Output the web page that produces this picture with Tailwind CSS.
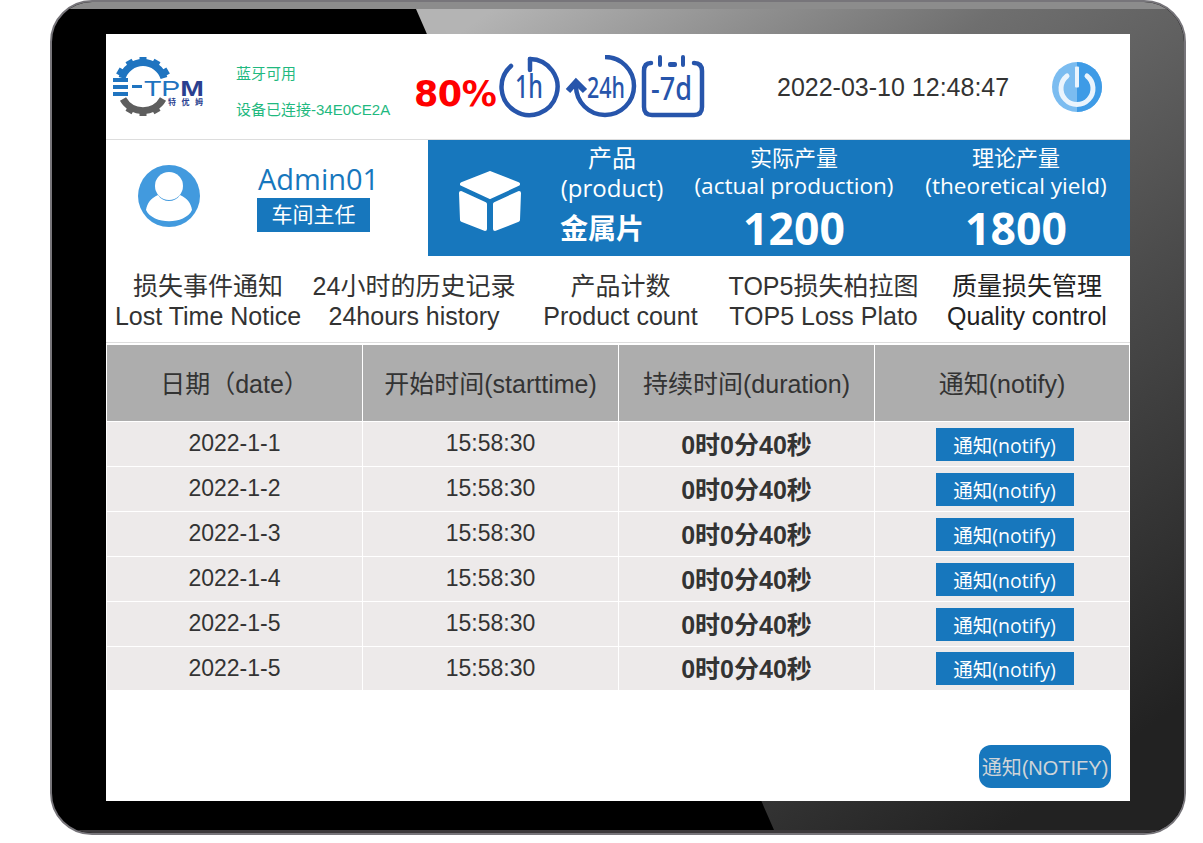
<!DOCTYPE html>
<html lang="en">
<head>
  <meta charset="UTF-8" />
  <title>E-TPM</title>
  <script src="https://cdn.jsdelivr.net/npm/@tailwindcss/browser@4"></script>
</head>
<body class="bg-white w-[1203px] h-[843px] overflow-hidden font-['Liberation_Sans','Noto_Sans_CJK_SC',sans-serif] text-[#333]">
  <!-- tablet frame -->
  <div class="relative ml-[50px] w-[1136px] h-[835px] pt-[34px] pl-[56px] rounded-[42px] bg-black border-[2px] border-[#77757a] box-border overflow-hidden">
    <svg class="absolute left-[-2px] top-[-2px]" width="1136" height="835" viewBox="0 0 1136 835">
      <defs>
        <linearGradient id="sheen" x1="0.1" y1="0" x2="0.75" y2="1">
          <stop offset="0" stop-color="#b4b4b4" />
          <stop offset="0.3" stop-color="#6f6f6f" />
          <stop offset="0.62" stop-color="#4a4a4a" />
          <stop offset="1" stop-color="#222222" />
        </linearGradient>
      </defs>
      <polygon points="366,9 1136,9 1136,835 724,830" fill="url(#sheen)" />
      <rect x="0" y="0" width="1136" height="9" fill="#8c8c8c" />
      <rect x="0" y="830" width="1136" height="5" fill="#3c393b" />
    </svg>

    <!-- screen -->
    <div class="relative w-[1024px] h-[767px] -mt-[2px] -ml-[2px] bg-white flex flex-col">
      <!-- top bar -->
      <div class="h-[106px] flex items-center border-b border-[#ddd] shrink-0">
        <svg class="ml-[7px] shrink-0" width="92" height="60" viewBox="113 57 92 60">
          <path d="M122 78 A22 22 0 0 1 164 78" fill="none" stroke="#1f74c0" stroke-width="7" />
          <g fill="#1f74c0">
            <rect x="139.5" y="57" width="7" height="6" /><rect x="152.5" y="60" width="7" height="6" transform="rotate(30 156 63)" /><rect x="126.5" y="60" width="7" height="6" transform="rotate(-30 130 63)" /><rect x="162" y="69" width="7" height="6" transform="rotate(60 165.5 72)" /><rect x="117" y="69" width="7" height="6" transform="rotate(-60 120.5 72)" />
          </g>
          <path d="M123 99 A23 23 0 0 0 163 99" fill="none" stroke="#5e5e5e" stroke-width="7" />
          <g fill="#5e5e5e">
            <rect x="139.5" y="110" width="7" height="6" /><rect x="126.5" y="107" width="7" height="6" transform="rotate(30 130 110)" /><rect x="152.5" y="107" width="7" height="6" transform="rotate(-30 156 110)" />
          </g>
          <g fill="#1f74c0"><rect x="113" y="78" width="15" height="4" /><rect x="113" y="85" width="15" height="4" /><rect x="113" y="92" width="15" height="4" /><rect x="132" y="85" width="10" height="3" /></g>
          <text x="144" y="96" font-family="Liberation Sans" font-size="22" textLength="60" lengthAdjust="spacingAndGlyphs"><tspan fill="#1f74c0">TP</tspan><tspan fill="#2a3f8f" font-weight="700">M</tspan></text>
          <text x="168" y="105" font-family="Noto Sans CJK SC" font-size="8" fill="#2a3f8f" font-weight="700" textLength="35">特优姆</text>
        </svg>
        <div class="ml-[31px] w-[178px] shrink-0 text-[15px] text-[#1fb97f] leading-[18px] whitespace-nowrap mt-[11px]">
          <div>蓝牙可用</div>
          <div class="mt-[18px]">设备已连接-34E0CE2A</div>
        </div>
        <div class="w-[84px] mt-[16px] shrink-0 font-['DejaVu_Sans',sans-serif] font-bold text-[35px] text-[#ff0000] tracking-[-0.5px] whitespace-nowrap">80%</div>
        <!-- viewBox uses page coordinates -->
        <svg class="shrink-0" width="208" height="64" viewBox="498 55 208 64">
          <g fill="none" stroke="#2755ab" stroke-width="4.5" stroke-linecap="round">
            <path d="M530 59 A28 28 0 1 1 511 66" />
            <path d="M530 59 V70" />
            <path d="M605 57 A29 29 0 1 1 576 86" stroke-linecap="butt" />
            <path d="M651 63 Q644 63 644 71 V107 Q644 115 652 115 H694 Q702 115 702 107 V71 Q702 63 694 63" />
            <path d="M568 91 L576 82 L585 91" stroke-width="6" stroke-linecap="butt" />
          </g>
          <g fill="#2755ab">
            <rect x="658" y="55" width="4" height="12" rx="2" /><rect x="681" y="55" width="4" height="12" rx="2" /><rect x="668" y="62" width="9" height="5" rx="2" />
          </g>
          <g font-family="Noto Sans" font-weight="500" fill="#2755ab">
            <text x="515" y="98" font-size="32" textLength="28" lengthAdjust="spacingAndGlyphs">1h</text>
            <text x="587" y="98" font-size="29" textLength="38" lengthAdjust="spacingAndGlyphs">24h</text>
            <text x="651" y="100" font-size="32" textLength="41" lengthAdjust="spacingAndGlyphs">-7d</text>
          </g>
        </svg>
        <div class="ml-[71px] w-[275px] shrink-0 text-[25px] text-[#333] mt-[3px] whitespace-nowrap">2022-03-10 12:48:47</div>
        <svg class="shrink-0" width="50" height="50" viewBox="0 0 50 50">
          <circle cx="25" cy="25" r="25" fill="#7bbcf0" />
          <path d="M25 0 A25 25 0 0 1 25 50 Z" fill="#3e9be6" />
          <path d="M15 14 A16 16 0 1 0 35 14" fill="none" stroke="#eaf4fd" stroke-width="5" stroke-linecap="round" />
          <rect x="23" y="4.5" width="4" height="21" rx="1" fill="#eaf4fd" />
        </svg>
      </div>

      <!-- user + product band -->
      <div class="h-[116px] flex shrink-0">
        <div class="w-[322px] flex shrink-0">
          <svg class="ml-[31px] mt-[25px] shrink-0" width="64" height="62" viewBox="0 0 64 62">
            <circle cx="32" cy="31" r="31" fill="#429ade" />
            <circle cx="32" cy="21" r="14" fill="#fff" />
            <path d="M9 45 C10 38 14 33 21 30 C26 38 38 38 43 30 C50 33 54 38 55 45 C48 60 16 60 9 45 Z" fill="#fff" />
          </svg>
          <div class="ml-[56px] mt-[21px]">
            <div class="pl-[1px] font-['Open_Sans',sans-serif] text-[29px] leading-[36px] text-[#1777bd]">Admin01</div>
            <div class="mt-[1px] w-[113px] h-[34px] bg-[#1777bd] text-white text-[21px] leading-[34px] text-center">车间主任</div>
          </div>
        </div>
        <div class="flex-1 bg-[#1777bd] text-white flex text-center font-['Open_Sans','Noto_Sans_CJK_SC',sans-serif]">
          <svg class="ml-[30px] mt-[31px] shrink-0" width="64" height="62" viewBox="0 0 64 62">
            <path d="M32 2 L60 13 L32 26 L4 13 Z" fill="#fff" stroke="#fff" stroke-width="4" stroke-linejoin="round" />
            <path d="M3 22 L27 33 V58 L4 49 Z" fill="#fff" stroke="#fff" stroke-width="4" stroke-linejoin="round" />
            <path d="M61 22 L37 33 V58 L60 49 Z" fill="#fff" stroke="#fff" stroke-width="4" stroke-linejoin="round" />
          </svg>
          <div class="ml-[30px] w-[120px] shrink-0">
            <div class="text-[24px] leading-[31px] mt-[2px]">产品</div>
            <div class="text-[24px] leading-[27px] whitespace-nowrap mt-[1px]">(product)</div>
            <div class="text-[28px] leading-[36px] font-bold mt-[9px] -ml-[20px]">金属片</div>
          </div>
          <div class="ml-[11px] w-[222px] shrink-0">
            <div class="text-[22px] leading-[31px] mt-[2px]">实际产量</div>
            <div class="text-[22.6px] leading-[27px] whitespace-nowrap -mt-[1px]">(actual production)</div>
            <div class="text-[44.5px] leading-[48px] font-bold mt-[5px]">1200</div>
          </div>
          <div class="w-[222px] shrink-0">
            <div class="text-[22px] leading-[31px] mt-[2px]">理论产量</div>
            <div class="text-[22.6px] leading-[27px] whitespace-nowrap -mt-[1px]">(theoretical yield)</div>
            <div class="text-[44.5px] leading-[48px] font-bold mt-[5px]">1800</div>
          </div>
        </div>
      </div>

      <!-- tabs -->
      <div class="h-[87px] shrink-0 border-b border-[#ddd] flex text-center text-[25px] leading-[30px] pt-[15px] whitespace-nowrap">
        <div class="w-[204px] shrink-0"><div>损失事件通知</div><div>Lost Time Notice</div></div>
        <div class="w-[208px] shrink-0"><div>24小时的历史记录</div><div>24hours history</div></div>
        <div class="w-[205px] shrink-0"><div>产品计数</div><div>Product count</div></div>
        <div class="w-[201px] shrink-0"><div>TOP5损失柏拉图</div><div>TOP5 Loss Plato</div></div>
        <div class="flex-1 text-[#222]"><div>质量损失管理</div><div>Quality control</div></div>
      </div>

      <!-- table -->
      <div class="mt-[2px] ml-[1px] w-[1022px] grid grid-cols-[255px_255px_255px_254px] gap-x-[1px]">
        <div class="h-[76px] pt-[3px] bg-[#adadad] flex items-center justify-center text-[25px]">日期（date）</div>
        <div class="h-[76px] pt-[3px] bg-[#adadad] flex items-center justify-center text-[25px]">开始时间(starttime)</div>
        <div class="h-[76px] pt-[3px] bg-[#adadad] flex items-center justify-center text-[25px]">持续时间(duration)</div>
        <div class="h-[76px] pt-[3px] bg-[#adadad] flex items-center justify-center text-[25px]">通知(notify)</div>

        <div class="h-[44px] mt-[1px] bg-[#edeaea] flex items-center justify-center text-[23px] pb-[1px]">2022-1-1</div>
        <div class="h-[44px] mt-[1px] bg-[#edeaea] flex items-center justify-center text-[23px] pb-[1px]">15:58:30</div>
        <div class="h-[44px] mt-[1px] bg-[#edeaea] flex items-center justify-center text-[25px] font-bold pt-[3px]">0时0分40秒</div>
        <div class="h-[44px] mt-[1px] bg-[#edeaea] flex items-center justify-center"><span class="w-[138px] h-[33px] ml-[5px] bg-[#1777bd] text-white text-[19.5px] leading-[35px] text-center font-['Open_Sans','Noto_Sans_CJK_SC',sans-serif]">通知(notify)</span></div>

        <div class="h-[45px] border-t border-[#fff] bg-[#edeaea] flex items-center justify-center text-[23px] pb-[2px]">2022-1-2</div>
        <div class="h-[45px] border-t border-[#fff] bg-[#edeaea] flex items-center justify-center text-[23px] pb-[2px]">15:58:30</div>
        <div class="h-[45px] border-t border-[#fff] bg-[#edeaea] flex items-center justify-center text-[25px] font-bold pt-[3px]">0时0分40秒</div>
        <div class="h-[45px] border-t border-[#fff] bg-[#edeaea] flex items-center justify-center"><span class="w-[138px] h-[33px] ml-[5px] bg-[#1777bd] text-white text-[19.5px] leading-[35px] text-center font-['Open_Sans','Noto_Sans_CJK_SC',sans-serif]">通知(notify)</span></div>

        <div class="h-[45px] border-t border-[#fff] bg-[#edeaea] flex items-center justify-center text-[23px] pb-[2px]">2022-1-3</div>
        <div class="h-[45px] border-t border-[#fff] bg-[#edeaea] flex items-center justify-center text-[23px] pb-[2px]">15:58:30</div>
        <div class="h-[45px] border-t border-[#fff] bg-[#edeaea] flex items-center justify-center text-[25px] font-bold pt-[3px]">0时0分40秒</div>
        <div class="h-[45px] border-t border-[#fff] bg-[#edeaea] flex items-center justify-center"><span class="w-[138px] h-[33px] ml-[5px] bg-[#1777bd] text-white text-[19.5px] leading-[35px] text-center font-['Open_Sans','Noto_Sans_CJK_SC',sans-serif]">通知(notify)</span></div>

        <div class="h-[45px] border-t border-[#fff] bg-[#edeaea] flex items-center justify-center text-[23px] pb-[2px]">2022-1-4</div>
        <div class="h-[45px] border-t border-[#fff] bg-[#edeaea] flex items-center justify-center text-[23px] pb-[2px]">15:58:30</div>
        <div class="h-[45px] border-t border-[#fff] bg-[#edeaea] flex items-center justify-center text-[25px] font-bold pt-[3px]">0时0分40秒</div>
        <div class="h-[45px] border-t border-[#fff] bg-[#edeaea] flex items-center justify-center"><span class="w-[138px] h-[33px] ml-[5px] bg-[#1777bd] text-white text-[19.5px] leading-[35px] text-center font-['Open_Sans','Noto_Sans_CJK_SC',sans-serif]">通知(notify)</span></div>

        <div class="h-[45px] border-t border-[#fff] bg-[#edeaea] flex items-center justify-center text-[23px] pb-[2px]">2022-1-5</div>
        <div class="h-[45px] border-t border-[#fff] bg-[#edeaea] flex items-center justify-center text-[23px] pb-[2px]">15:58:30</div>
        <div class="h-[45px] border-t border-[#fff] bg-[#edeaea] flex items-center justify-center text-[25px] font-bold pt-[3px]">0时0分40秒</div>
        <div class="h-[45px] border-t border-[#fff] bg-[#edeaea] flex items-center justify-center"><span class="w-[138px] h-[33px] ml-[5px] bg-[#1777bd] text-white text-[19.5px] leading-[35px] text-center font-['Open_Sans','Noto_Sans_CJK_SC',sans-serif]">通知(notify)</span></div>

        <div class="h-[44px] border-t border-[#fff] bg-[#edeaea] flex items-center justify-center text-[23px] pb-[1px]">2022-1-5</div>
        <div class="h-[44px] border-t border-[#fff] bg-[#edeaea] flex items-center justify-center text-[23px] pb-[1px]">15:58:30</div>
        <div class="h-[44px] border-t border-[#fff] bg-[#edeaea] flex items-center justify-center text-[25px] font-bold pt-[2px]">0时0分40秒</div>
        <div class="h-[44px] border-t border-[#fff] bg-[#edeaea] flex items-center justify-center"><span class="w-[138px] h-[33px] ml-[5px] bg-[#1777bd] text-white text-[19.5px] leading-[35px] text-center font-['Open_Sans','Noto_Sans_CJK_SC',sans-serif]">通知(notify)</span></div>
      </div>

      <!-- footer button -->
      <div class="flex-1 flex justify-end items-end pr-[19px] pb-[13px]">
        <div class="w-[132px] h-[43px] rounded-[12px] bg-[#1777bd] text-[#cfd4d8] text-[20px] leading-[46px] text-center whitespace-nowrap">通知(NOTIFY)</div>
      </div>
    </div>
  </div>
</body>
</html>
